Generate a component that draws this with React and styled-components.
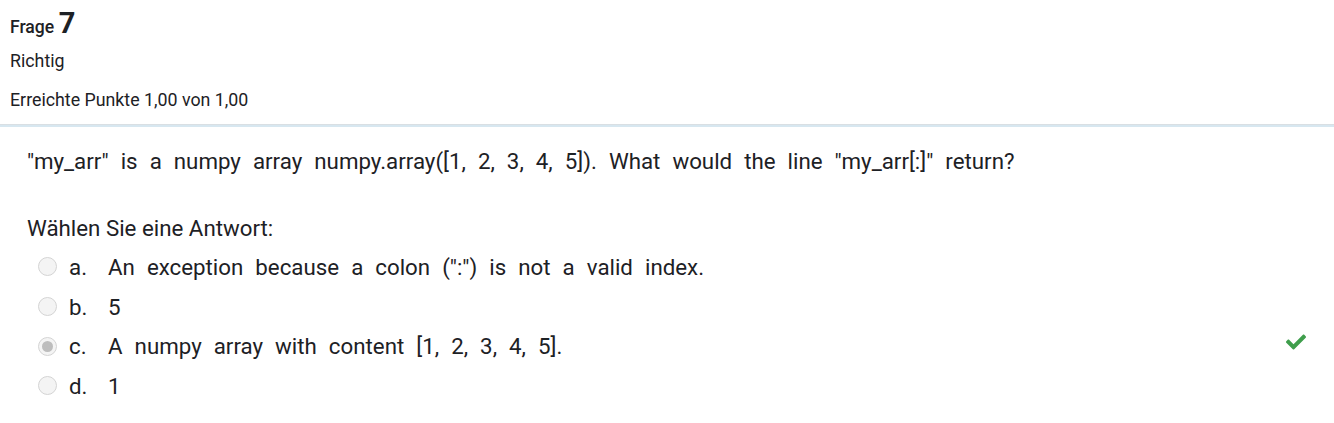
import React from 'react';
import styled, { createGlobalStyle } from 'styled-components';
import { FaCheck } from 'react-icons/fa';

const GlobalStyle = createGlobalStyle`
  body {
    margin: 0;
    background: #fff;
    font-family: Roboto, "Liberation Sans", sans-serif;
    color: #1d2125;
  }
`;

const Info = styled.div`
  padding: 7px 10px 0;
`;
const Heading = styled.h3`
  margin: 0;
  font-size: 17.6px;
  font-weight: 500;
  line-height: 32px;
  color: #1d2125;
`;
const Number = styled.span`
  font-size: 29px;
  font-weight: 700;
`;
const Meta = styled.div`
  font-size: 17.8px;
  line-height: 24px;
  margin-top: ${p => p.gap}px;
`;
const Divider = styled.div`
  margin-top: 12px;
  height: 1px;
  background: #d9dfe3;
  border-bottom: 2px solid #d7e7f0;
`;
const Content = styled.div`
  padding: 19px 27px 0;
`;
const QuestionText = styled.p`
  margin: 0;
  font-size: 22.3px;
  line-height: 30px;
  word-spacing: 6.5px;
`;
const Prompt = styled.div`
  margin-top: 37px;
  font-size: 22.3px;
  line-height: 30px;
`;
const Options = styled.div`
  margin-top: 4px;
  display: flex;
  flex-direction: column;
`;
const Option = styled.div`
  display: flex;
  align-items: center;
  height: 39.7px;
  font-size: 22.3px;
  word-spacing: 6.5px;
  padding-left: 11px;
`;
const Radio = styled.span`
  width: 19px;
  height: 19px;
  border-radius: 50%;
  border: 1px solid #d4d4d4;
  background: #f4f4f4;
  box-sizing: border-box;
  display: flex;
  align-items: center;
  justify-content: center;
  margin-right: 12px;
  &::after {
    content: '';
    display: ${p => (p.checked ? 'block' : 'none')};
    width: 11px;
    height: 11px;
    border-radius: 50%;
    background: #bdbdbd;
  }
`;
const Letter = styled.span`
  width: 39px;
`;
const Label = styled.span`
  flex: 1;
`;
const Mark = styled.span`
  color: #3f9e4c;
  font-size: 20px;
  display: flex;
  margin-right: 1px;
  margin-bottom: 8px;
`;

const answers = [
  { key: 'a', text: 'An exception because a colon (":") is not a valid index.' },
  { key: 'b', text: '5' },
  { key: 'c', text: 'A numpy array with content [1, 2, 3, 4, 5].', checked: true },
  { key: 'd', text: '1' },
];

const App = () => (
  <>
    <GlobalStyle />
    <Info>
      <Heading>
        Frage <Number>7</Number>
      </Heading>
      <Meta gap={6}>Richtig</Meta>
      <Meta gap={15}>Erreichte Punkte 1,00 von 1,00</Meta>
    </Info>
    <Divider />
    <Content>
      <QuestionText>
        "my_arr" is a numpy array numpy.array([1, 2, 3, 4, 5]). What would the line "my_arr[:]" return?
      </QuestionText>
      <Prompt>Wählen Sie eine Antwort:</Prompt>
      <Options>
        {answers.map(a => (
          <Option key={a.key}>
            <Radio checked={a.checked} />
            <Letter>{a.key}.</Letter>
            <Label>{a.text}</Label>
            {a.checked && (
              <Mark>
                <FaCheck />
              </Mark>
            )}
          </Option>
        ))}
      </Options>
    </Content>
  </>
);

export default App;
